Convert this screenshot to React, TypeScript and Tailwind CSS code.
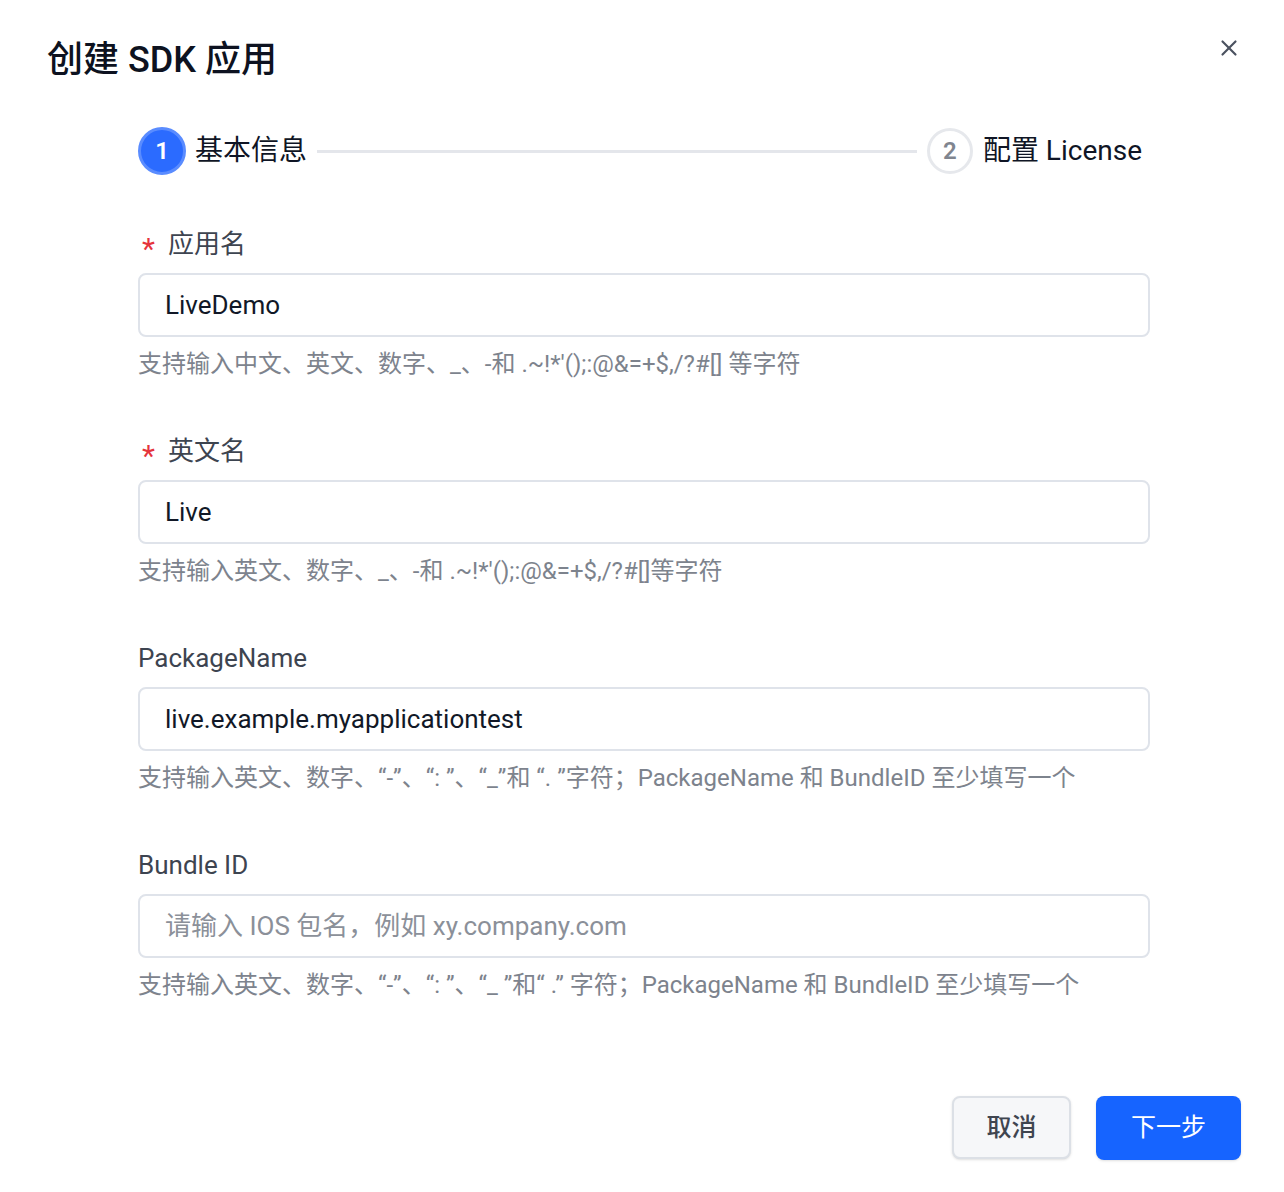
import React from 'react';
import { X } from 'lucide-react';

const FONT = { fontFamily: 'Roboto, "Noto Sans CJK SC", sans-serif' };

interface FieldProps {
    label: string;
    required?: boolean;
    value?: string;
    placeholder?: string;
    help: string;
}

function Field({ label, required, value, placeholder, help }: FieldProps) {
    return (
        <div className="flex flex-col">
            <div className="flex items-center h-[36px] text-[26px] text-[#3d4450]">
                {required && <span className="text-[#e5343b] text-[30px] mr-[13px] ml-[4px] leading-none pt-[10px]">*</span>}
                <span>{label}</span>
            </div>
            <div className="mt-[11px] h-[64px] rounded-[8px] border-2 border-[#dfe3ea] bg-white flex items-center px-[25px]">
                {value ? (
                    <span className="text-[26px] text-[#111827]">{value}</span>
                ) : (
                    <span className="text-[26px] text-[#8b9099]">{placeholder}</span>
                )}
            </div>
            <div className="mt-[11px] h-[32px] flex items-center text-[24px] text-[#7d838d]">{help}</div>
        </div>
    );
}

export default function App() {
    return (
        <div className="w-[1284px] h-[1192px] bg-white flex flex-col" style={FONT}>
            <div className="flex items-start justify-between pl-[47px] pr-[42px] pt-[40px]">
                <h1 className="text-[36px] leading-[40px] font-medium text-[#0d1220]">创建 SDK 应用</h1>
                <button className="mt-[-5px] text-[#4b5260]">
                    <X size={26} strokeWidth={2} />
                </button>
            </div>

            <div className="pl-[138px] pr-[134px]">
                <div className="mt-[47px] flex items-center pr-[8px]">
                    <div className="w-[48px] h-[48px] rounded-full bg-[#2b6bff] border-[3px] border-[#5a8cff] flex items-center justify-center text-white text-[24px] font-semibold">
                        1
                    </div>
                    <span className="ml-[9px] text-[28px] text-[#0f1525]">基本信息</span>
                    <div className="flex-1 h-[3px] bg-[#e4e6eb] mx-[10px]" />
                    <div className="w-[46px] h-[46px] rounded-full border-[3px] border-[#e6e8ec] flex items-center justify-center text-[#80858f] text-[24px] font-semibold">
                        2
                    </div>
                    <span className="ml-[10px] text-[28px] text-[#0f1525]">配置 License</span>
                </div>

                <div className="mt-[51px] flex flex-col gap-[53px]">
                    <Field
                        label="应用名"
                        required
                        value="LiveDemo"
                        help="支持输入中文、英文、数字、_、-和 .~!*'();:@&=+$,/?#[] 等字符"
                    />
                    <Field
                        label="英文名"
                        required
                        value="Live"
                        help="支持输入英文、数字、_、-和 .~!*'();:@&=+$,/?#[]等字符"
                    />
                    <Field
                        label="PackageName"
                        value="live.example.myapplicationtest"
                        help="支持输入英文、数字、“-”、“: ”、“_”和 “. ”字符；PackageName 和 BundleID 至少填写一个"
                    />
                    <Field
                        label="Bundle ID"
                        placeholder="请输入 IOS 包名，例如 xy.company.com"
                        help="支持输入英文、数字、“-”、“: ”、“_ ”和“ .” 字符；PackageName 和 BundleID 至少填写一个"
                    />
                </div>
            </div>

            <div className="mt-[95px] flex justify-end gap-[25px] pr-[43px]">
                <button className="w-[119px] h-[63px] rounded-[8px] bg-[#f6f7f9] border-2 border-[#dce0e6] shadow-sm text-[25px] text-[#3f4550] font-medium">
                    取消
                </button>
                <button className="w-[145px] h-[64px] rounded-[8px] bg-[#1664ff] shadow-sm text-[25px] text-white">
                    下一步
                </button>
            </div>
        </div>
    );
}
